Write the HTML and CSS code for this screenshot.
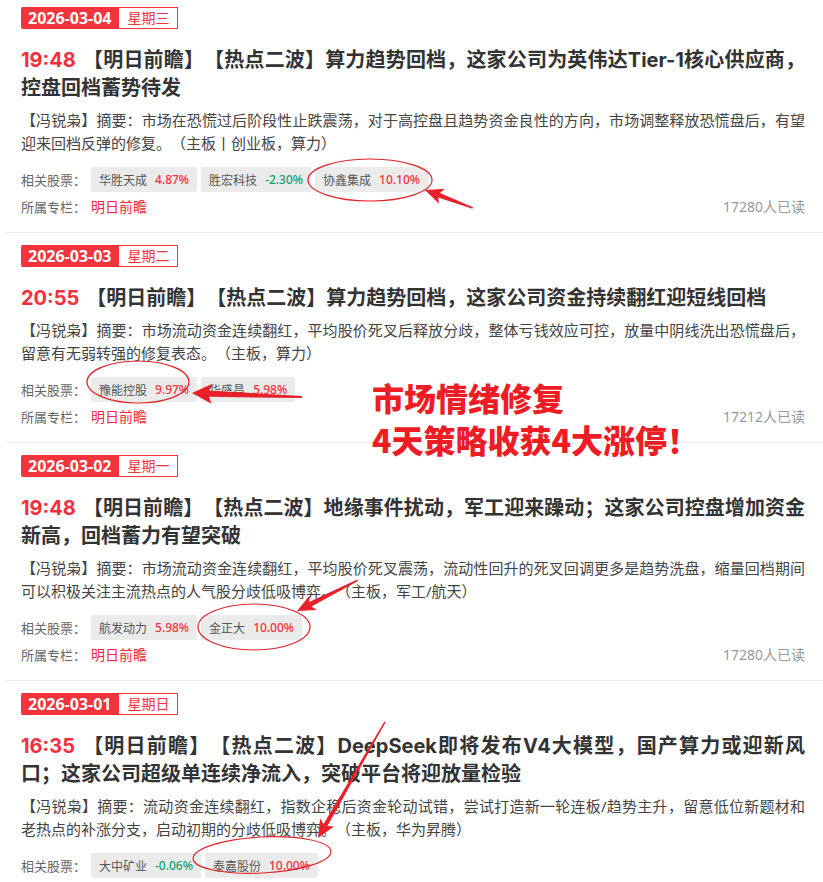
FILE: index.html
```html
<!DOCTYPE html>
<html lang="zh-CN">
<head>
  <meta charset="UTF-8">
  <title>明日前瞻</title>
  <link rel="stylesheet" href="styles.css">
</head>
<body>

<div class="page">
  <div class="feed">

    <div class="item">
      <div class="date"><span class="day">2026-03-04</span><span class="week">星期三</span></div>
      <h3 class="title"><span class="time">19:48</span>【明日前瞻】【热点二波】算力趋势回档，这家公司为英伟达Tier-1核心供应商，控盘回档蓄势待发</h3>
      <p class="summary">【冯锐枭】摘要：市场在恐慌过后阶段性止跌震荡，对于高控盘且趋势资金良性的方向，市场调整释放恐慌盘后，有望迎来回档反弹的修复。（主板丨创业板，算力）</p>
      <div class="stocks">
        <span class="label">相关股票：</span>
        <span class="tag">华胜天成<em class="up">4.87%</em></span>
        <span class="tag">胜宏科技<em class="down">-2.30%</em></span>
        <span class="tag">协鑫集成<em class="up">10.10%</em></span>
      </div>
      <div class="meta">
        <span class="label">所属专栏：</span><a class="column">明日前瞻</a>
        <span class="reads">17280人已读</span>
      </div>
    </div>

    <div class="item">
      <div class="date"><span class="day">2026-03-03</span><span class="week">星期二</span></div>
      <h3 class="title"><span class="time">20:55</span>【明日前瞻】【热点二波】算力趋势回档，这家公司资金持续翻红迎短线回档</h3>
      <p class="summary">【冯锐枭】摘要：市场流动资金连续翻红，平均股价死叉后释放分歧，整体亏钱效应可控，放量中阴线洗出恐慌盘后，留意有无弱转强的修复表态。（主板，算力）</p>
      <div class="stocks">
        <span class="label">相关股票：</span>
        <span class="tag">豫能控股<em class="up">9.97%</em></span>
        <span class="tag">华盛昌<em class="up">5.98%</em></span>
      </div>
      <div class="meta">
        <span class="label">所属专栏：</span><a class="column">明日前瞻</a>
        <span class="reads">17212人已读</span>
      </div>
    </div>

    <div class="item">
      <div class="date"><span class="day">2026-03-02</span><span class="week">星期一</span></div>
      <h3 class="title"><span class="time">19:48</span>【明日前瞻】【热点二波】地缘事件扰动，军工迎来躁动；这家公司控盘增加资金新高，回档蓄力有望突破</h3>
      <p class="summary">【冯锐枭】摘要：市场流动资金连续翻红，平均股价死叉震荡，流动性回升的死叉回调更多是趋势洗盘，缩量回档期间可以积极关注主流热点的人气股分歧低吸博弈。（主板，军工/航天）</p>
      <div class="stocks">
        <span class="label">相关股票：</span>
        <span class="tag">航发动力<em class="up">5.98%</em></span>
        <span class="tag">金正大<em class="up">10.00%</em></span>
      </div>
      <div class="meta">
        <span class="label">所属专栏：</span><a class="column">明日前瞻</a>
        <span class="reads">17280人已读</span>
      </div>
    </div>

    <div class="item">
      <div class="date"><span class="day">2026-03-01</span><span class="week">星期日</span></div>
      <h3 class="title"><span class="time">16:35</span>【明日前瞻】【热点二波】DeepSeek即将发布V4大模型，国产算力或迎新风口；这家公司超级单连续净流入，突破平台将迎放量检验</h3>
      <p class="summary">【冯锐枭】摘要：流动资金连续翻红，指数企稳后资金轮动试错，尝试打造新一轮连板/趋势主升，留意低位新题材和老热点的补涨分支，启动初期的分歧低吸博弈。（主板，华为昇腾）</p>
      <div class="stocks">
        <span class="label">相关股票：</span>
        <span class="tag">大中矿业<em class="down">-0.06%</em></span>
        <span class="tag">泰嘉股份<em class="up">10.00%</em></span>
      </div>
      <div class="meta">
        <span class="label">所属专栏：</span><a class="column">明日前瞻</a>
        <span class="reads">17198人已读</span>
      </div>
    </div>

  </div>

  <!-- hand-drawn marks on top of the list -->
  <svg class="marks" width="823" height="882" viewBox="0 0 823 882">
    <g fill="none" stroke="#e3242b" stroke-width="1.2">
      <ellipse cx="370" cy="180" rx="62" ry="21"/>
      <ellipse cx="138" cy="382" rx="51" ry="21"/>
      <ellipse cx="254" cy="627" rx="56" ry="23"/>
      <ellipse cx="262" cy="855" rx="69" ry="18" transform="rotate(-3 262 855)"/>
    </g>
    <g fill="#e8202a">
      <polygon transform="translate(425 190) rotate(20.6)" points="0,0 18,-8 15,-2.5 51,-0.8 51,0.8 15,2.5 18,8"/>
      <polygon transform="translate(192 393) rotate(2.1)" points="0,0 20,-10 17,-3.2 110,-1 110,1 17,3.2 20,10"/>
      <polygon transform="translate(297 611) rotate(-26.9)" points="0,0 18,-8 15,-2.5 68,-0.8 68,0.8 15,2.5 18,8"/>
      <polygon transform="translate(318 838) rotate(-60)" points="0,0 18,-8 15,-2.2 134,-0.7 134,0.7 15,2.2 18,8"/>
    </g>
  </svg>
  <div class="callout">市场情绪修复<br>4天策略收获4大涨停！</div>
</div>

</body>
</html>
```

FILE: styles.css
```css
* {
  box-sizing: border-box;
}
body {
  margin: 0;
  background: #fff;
  font-family: "Noto Sans", "Noto Sans CJK SC", sans-serif;
  color: #333;
  text-spacing-trim: space-all;
}
.page {
  position: relative;
  width: 823px;
  height: 882px;
  overflow: hidden;
}
.feed {
  margin-top: -5px;
}
.item {
  margin-left: 5px;
  padding: 12px 18px 15px 16px;
  border-bottom: 1px solid #ececec;
}
.date {
  display: flex;
  height: 22px;
}
.day {
  background: #f3343c;
  color: #fff;
  font-weight: 700;
  font-size: 16px;
  line-height: 22px;
  padding: 0 7px;
  border-radius: 2px 0 0 2px;
}
.week {
  border: 1px solid #f3343c;
  color: #f3343c;
  font-size: 14px;
  line-height: 20px;
  padding: 0 8px;
  background: #fff;
}
.title {
  margin: 17px 0 0;
  font-family: Inter, "Noto Sans CJK SC", sans-serif;
  font-size: 20px;
  line-height: 28px;
  font-weight: 700;
  color: #333;
  text-align: justify;
}
.time {
  color: #f52f3e;
  margin-right: 7px;
}
.summary {
  margin: 7px 0 0;
  font-size: 15px;
  line-height: 23px;
  color: #444;
  text-align: justify;
}
.stocks {
  display: flex;
  align-items: center;
  margin-top: 12px;
  height: 25px;
}
.label {
  display: inline-block;
  width: 70px;
  font-size: 13px;
  color: #666;
}
.tag {
  display: flex;
  align-items: center;
  height: 25px;
  padding: 0 8px;
  margin-right: 4px;
  background: #ebebeb;
  border-radius: 2px;
  font-size: 12px;
  color: #555;
}
.tag em {
  font-style: normal;
  font-weight: 500;
  margin-left: 8px;
}
.up {
  color: #f3343c;
}
.down {
  color: #139f6e;
}
.meta {
  display: flex;
  align-items: center;
  margin-top: 3px;
  height: 22px;
  font-size: 14px;
}
.column {
  color: #f5283c;
}
.reads {
  margin-left: auto;
  color: #999;
}
.marks {
  position: absolute;
  top: 0;
  left: 0;
  pointer-events: none;
}
.callout {
  position: absolute;
  left: 372px;
  top: 376px;
  font-family: "Noto Sans CJK SC", sans-serif;
  font-size: 32px;
  line-height: 42px;
  font-weight: 900;
  color: #ee1d25;
}
```
